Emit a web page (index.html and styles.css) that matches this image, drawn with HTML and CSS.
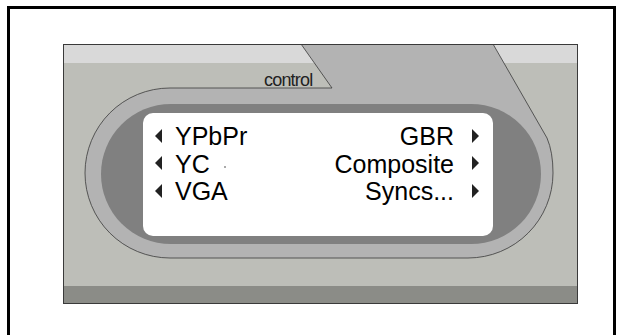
FILE: index.html
```html
<!DOCTYPE html>
<html>
<head>
  <meta charset="utf-8">
  <link rel="stylesheet" href="styles.css">
</head>
<body>
  <div class="frame">
    <div class="panel">
      <svg class="panel-art" width="515" height="260" viewBox="0 0 515 260">
        <rect x="0" y="0" width="515" height="260" fill="#bdbeb8"/>
        <rect x="0" y="0" width="515" height="19" fill="#d9d9d9"/>
        <rect x="0" y="242" width="515" height="18" fill="#8b8c87"/>
        <!-- the lighter band with the tab and the ring -->
        <path d="M238,0 L269,44 L107,44 A85,85 0 0 0 107,214 L405,214 A85,85 0 0 0 490,129 Q490,108 484,94 L430,0 Z" fill="#b3b3b3"/>
        <path d="M238,0 L269,44 L107,44 A85,85 0 0 0 107,214 L405,214 A85,85 0 0 0 490,129 Q490,108 484,94 L430,0" fill="none" stroke="#3a3a3a" stroke-width="0.8"/>
        <rect x="38" y="60" width="440" height="140" rx="70" fill="#808080"/>
        <rect x="0.5" y="0.5" width="514" height="259" fill="none" stroke="#3a3a3a" stroke-width="1"/>
      </svg>
      <div class="label">control</div>
      <div class="screen">
        <div class="row">
          <span class="opt"><i class="arr-l"></i>YPbPr</span>
          <span class="opt">GBR<i class="arr-r"></i></span>
        </div>
        <div class="row">
          <span class="opt"><i class="arr-l"></i>YC<b class="speck"></b></span>
          <span class="opt">Composite<i class="arr-r"></i></span>
        </div>
        <div class="row">
          <span class="opt"><i class="arr-l"></i>VGA</span>
          <span class="opt">Syncs...<i class="arr-r"></i></span>
        </div>
      </div>
    </div>
  </div>
</body>
</html>
```

FILE: styles.css
```css
html, body {
  margin: 0;
  padding: 0;
  background: #fff;
  font-family: "Liberation Sans", Arial, sans-serif;
}

.frame {
  box-sizing: border-box;
  width: 609px;
  height: 340px;
  margin: 6px 0 0 7px;
  padding: 35px 0 0 53px;
  border: 3px solid #000;
  border-bottom: 0;
}

.panel {
  display: grid;
  width: 515px;
  height: 260px;
}

.panel > * {
  grid-area: 1 / 1;
  align-self: start;
  justify-self: start;
}

.panel-art {
  display: block;
}

.label {
  margin: 27px 0 0 201px;
  font-size: 18px;
  line-height: 18px;
  letter-spacing: -0.8px;
  color: #222;
}

.screen {
  box-sizing: border-box;
  width: 350px;
  height: 123px;
  margin: 69px 0 0 80px;
  padding: 10px 14px 0 12px;
  background: #fff;
  border-radius: 10px;
  font-size: 25px;
  line-height: 27.5px;
  color: #000;
}

.row {
  display: flex;
  justify-content: space-between;
}

.opt {
  display: flex;
  align-items: center;
}

.arr-l, .arr-r {
  display: block;
  width: 0;
  height: 0;
  margin-top: -2px;
  border-top: 7px solid transparent;
  border-bottom: 7px solid transparent;
}

.arr-l {
  border-right: 7px solid #222;
  margin-right: 13px;
}

.arr-r {
  border-left: 7px solid #222;
  margin-left: 18px;
}

.speck {
  display: block;
  width: 2px;
  height: 2px;
  margin: 6px 0 0 14px;
  background: #aaa;
}
```
